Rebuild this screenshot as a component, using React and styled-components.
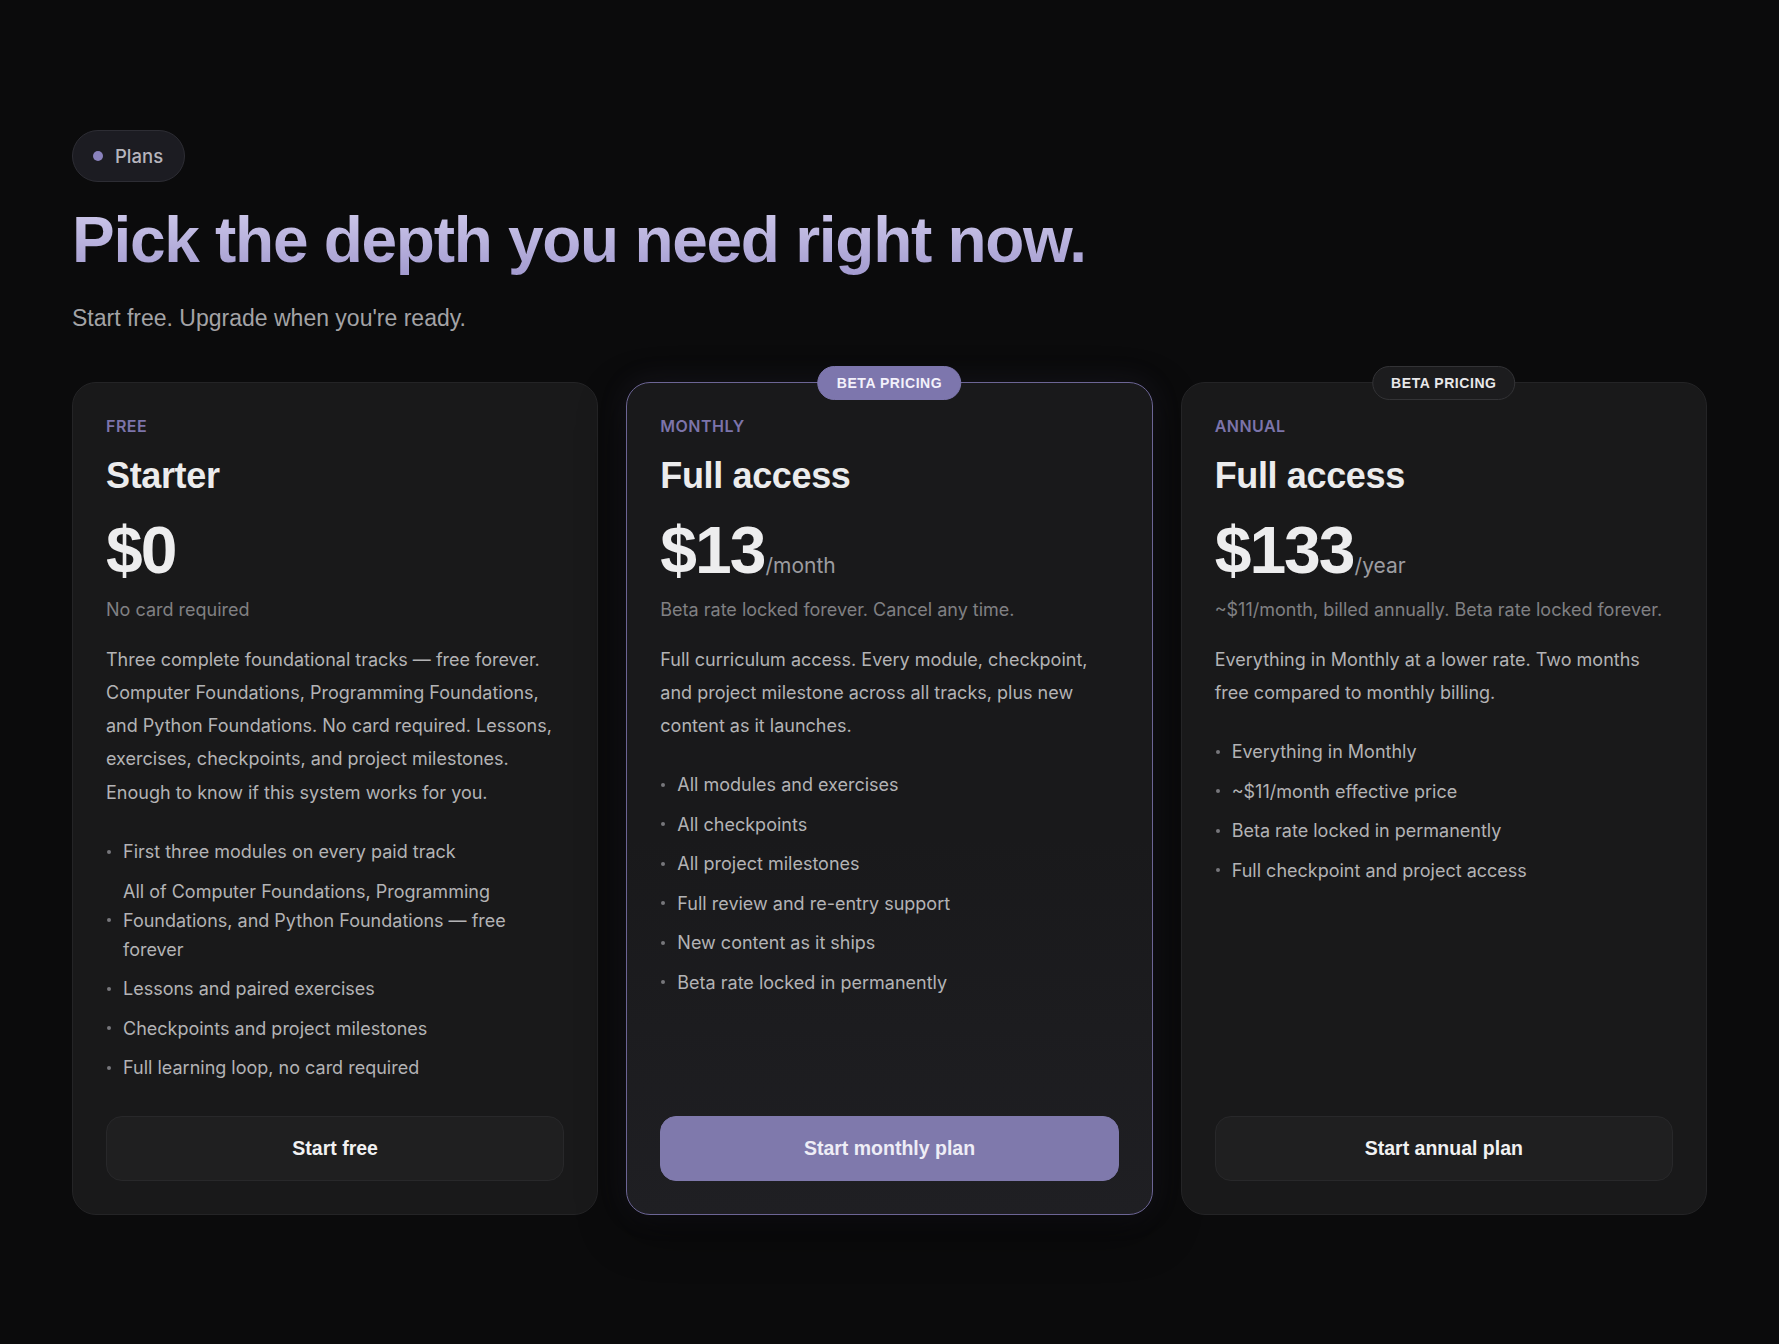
import React from "react";
import styled, { createGlobalStyle, css } from "styled-components";

const GlobalStyle = createGlobalStyle`
  html, body {
    margin: 0;
    padding: 0;
    background: #0b0b0c;
  }
  body {
    min-height: 100vh;
    font-family: "Inter", "Liberation Sans", sans-serif;
    -webkit-font-smoothing: antialiased;
  }
  * { box-sizing: border-box; }
`;

const plans = [
  {
    id: "free",
    label: "FREE",
    title: "Starter",
    price: "$0",
    note: "No card required",
    desc:
      "Three complete foundational tracks — free forever. Computer Foundations, Programming Foundations, and Python Foundations. No card required. Lessons, exercises, checkpoints, and project milestones. Enough to know if this system works for you.",
    features: [
      "First three modules on every paid track",
      "All of Computer Foundations, Programming Foundations, and Python Foundations — free forever",
      "Lessons and paired exercises",
      "Checkpoints and project milestones",
      "Full learning loop, no card required"
    ],
    cta: "Start free"
  },
  {
    id: "monthly",
    label: "MONTHLY",
    title: "Full access",
    price: "$13",
    period: "/month",
    note: "Beta rate locked forever. Cancel any time.",
    desc:
      "Full curriculum access. Every module, checkpoint, and project milestone across all tracks, plus new content as it launches.",
    features: [
      "All modules and exercises",
      "All checkpoints",
      "All project milestones",
      "Full review and re-entry support",
      "New content as it ships",
      "Beta rate locked in permanently"
    ],
    cta: "Start monthly plan",
    featured: true,
    badge: "BETA PRICING"
  },
  {
    id: "annual",
    label: "ANNUAL",
    title: "Full access",
    price: "$133",
    period: "/year",
    note: "~$11/month, billed annually. Beta rate locked forever.",
    desc:
      "Everything in Monthly at a lower rate. Two months free compared to monthly billing.",
    features: [
      "Everything in Monthly",
      "~$11/month effective price",
      "Beta rate locked in permanently",
      "Full checkpoint and project access"
    ],
    cta: "Start annual plan",
    badge: "BETA PRICING"
  }
];

const App = () => (
  <>
    <GlobalStyle />
    <Page>
      <Eyebrow>
        <Dot />
        Plans
      </Eyebrow>
      <Heading>Pick the depth you need right now.</Heading>
      <Lead>Start free. Upgrade when you're ready.</Lead>

      <Grid>
        {plans.map((plan) => (
          <Card key={plan.id} $featured={plan.featured}>
            {plan.badge && <Badge $featured={plan.featured}>{plan.badge}</Badge>}
            <Label>{plan.label}</Label>
            <Title>{plan.title}</Title>
            <PriceRow>
              <Price>{plan.price}</Price>
              {plan.period && <Period>{plan.period}</Period>}
            </PriceRow>
            <Note>{plan.note}</Note>
            <Desc>{plan.desc}</Desc>
            <Features>
              {plan.features.map((f) => (
                <Feature key={f}>
                  <Bullet />
                  <span>{f}</span>
                </Feature>
              ))}
            </Features>
            <Cta $featured={plan.featured}>{plan.cta}</Cta>
          </Card>
        ))}
      </Grid>
    </Page>
  </>
);

export default App;

const Page = styled.main`
  padding: 130px 72px 120px;
`;

const Eyebrow = styled.div`
  display: inline-flex;
  align-items: center;
  gap: 12px;
  padding: 13px 21px 13px 20px;
  border: 1px solid #2d2d34;
  border-radius: 999px;
  background: #1c1c22;
  color: #b6b5bd;
  font-size: 18.5px;
  line-height: 24px;
  font-weight: 500;
`;

const Dot = styled.span`
  width: 10px;
  height: 10px;
  border-radius: 50%;
  background: #8a82bd;
`;

const Heading = styled.h1`
  margin: 23px 0 0;
  font-family: "Liberation Sans", Arial, sans-serif;
  font-size: 64px;
  line-height: 1.1;
  font-weight: 700;
  letter-spacing: -0.02em;
  background: linear-gradient(180deg, #d0cbec 0%, #a39bd0 100%);
  -webkit-background-clip: text;
  background-clip: text;
  color: transparent;
  width: fit-content;
`;

const Lead = styled.p`
  margin: 27px 0 0;
  font-family: "Liberation Sans", Arial, sans-serif;
  font-size: 23px;
  line-height: 1.4;
  color: #a3a3a6;
`;

const Grid = styled.div`
  display: grid;
  grid-template-columns: repeat(3, 1fr);
  gap: 28px;
  margin-top: 47px;
`;

const Card = styled.section`
  position: relative;
  display: flex;
  flex-direction: column;
  padding: 33px;
  border-radius: 24px;
  border: 1px solid #242426;
  background: #19191a;

  ${({ $featured }) =>
    $featured &&
    css`
      border-color: #6c6595;
      background: linear-gradient(180deg, #19191b 55%, #1f1f23 100%);
      box-shadow: 0 16px 48px rgba(0, 0, 0, 0.45),
        0 0 30px rgba(126, 118, 174, 0.12);
    `}
`;

const Badge = styled.span`
  position: absolute;
  top: 0;
  left: 50%;
  transform: translate(-50%, -50%);
  padding: 8px 18px;
  border-radius: 999px;
  font-family: "Liberation Sans", Arial, sans-serif;
  font-size: 14px;
  line-height: 16px;
  font-weight: 700;
  letter-spacing: 0.04em;
  white-space: nowrap;
  color: #e8e8ea;
  background: #1c1c1e;
  border: 1px solid #333336;

  ${({ $featured }) =>
    $featured &&
    css`
      color: #f3f1fb;
      background: #7d76ad;
      border-color: #7d76ad;
    `}
`;

const Label = styled.div`
  font-size: 16px;
  line-height: 20px;
  font-weight: 600;
  letter-spacing: 0.03em;
  color: #7c74aa;
`;

const Title = styled.h2`
  margin: 19px 0 0;
  font-family: "Liberation Sans", Arial, sans-serif;
  font-size: 36px;
  line-height: 42px;
  font-weight: 700;
  letter-spacing: -0.01em;
  color: #ececed;
`;

const PriceRow = styled.div`
  display: flex;
  align-items: baseline;
  margin-top: 20px;
`;

const Price = styled.span`
  font-family: "Liberation Sans", Arial, sans-serif;
  font-size: 66px;
  line-height: 1;
  font-weight: 700;
  letter-spacing: -0.03em;
  color: #ededee;
`;

const Period = styled.span`
  margin-left: 1px;
  font-size: 21px;
  color: #9c9ca0;
`;

const Note = styled.p`
  margin: 14px 0 0;
  font-size: 18px;
  line-height: 26px;
  color: #808083;
  white-space: nowrap;
`;

const Desc = styled.p`
  margin: 20px 0 0;
  font-size: 18px;
  line-height: 1.85;
  color: #b3b3b5;
`;

const Features = styled.ul`
  list-style: none;
  margin: 28px 0 34px;
  padding: 0;
  display: flex;
  flex-direction: column;
  gap: 10.5px;
`;

const Feature = styled.li`
  display: flex;
  align-items: center;
  gap: 12px;
  font-size: 18px;
  line-height: 29px;
  color: #b3b3b5;
`;

const Bullet = styled.span`
  flex: none;
  width: 4px;
  height: 4px;
  margin-left: 1px;
  border-radius: 50%;
  background: #77777b;
`;

const Cta = styled.button`
  margin-top: auto;
  flex: none;
  height: 65px;
  width: 100%;
  border-radius: 16px;
  border: 1px solid #28282a;
  background: #1f1f20;
  color: #f1f1f2;
  font-family: "Liberation Sans", Arial, sans-serif;
  font-size: 19.5px;
  font-weight: 700;
  cursor: pointer;

  ${({ $featured }) =>
    $featured &&
    css`
      border-color: #7f79ac;
      background: #7f79ac;
      color: #eeedf6;
    `}
`;
